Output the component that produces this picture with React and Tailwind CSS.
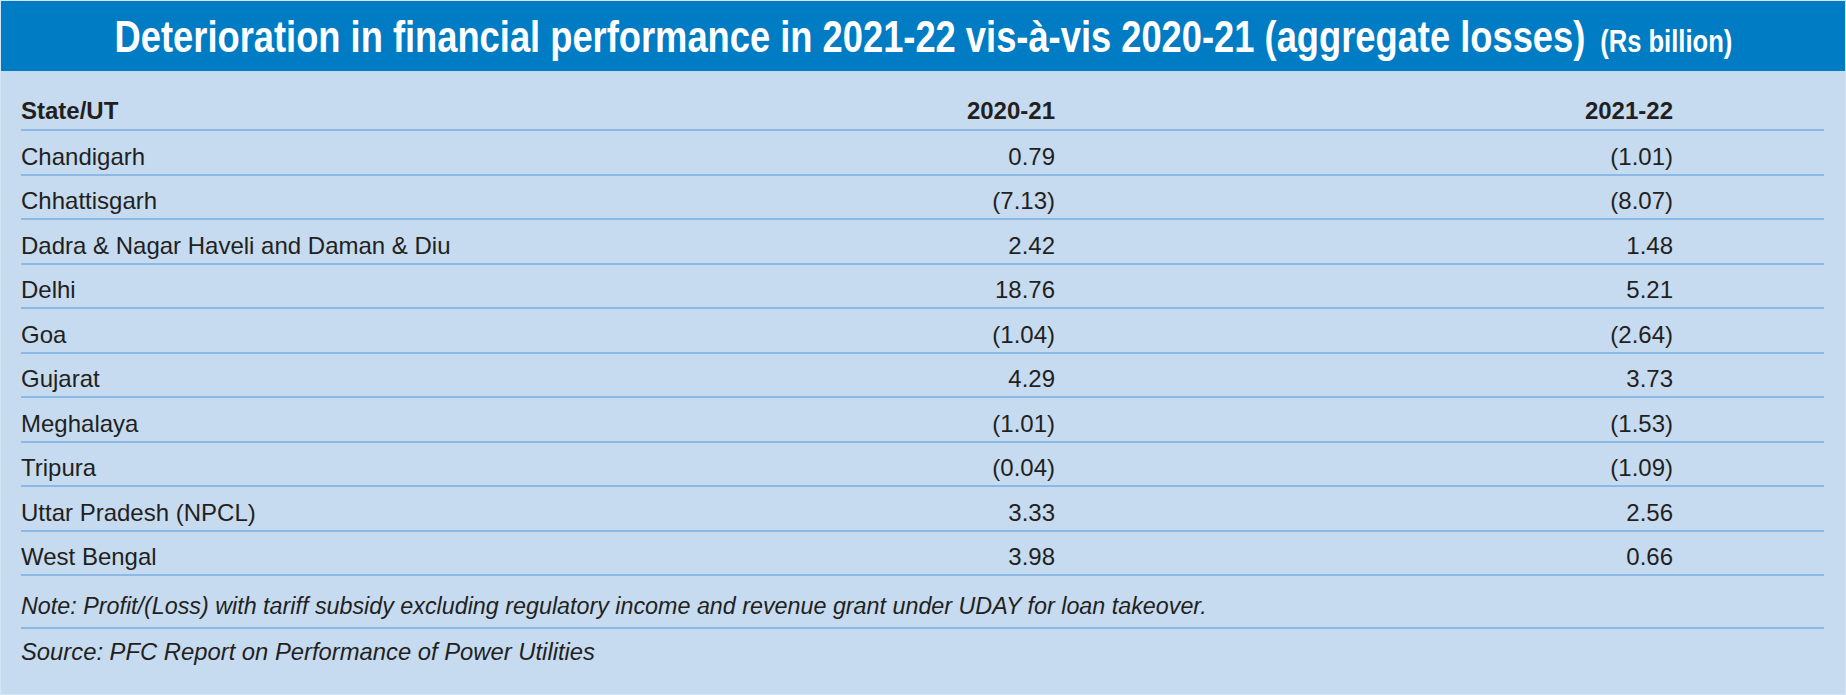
import React from 'react';

const rows = [
  ['Chandigarh', '0.79', '(1.01)'],
  ['Chhattisgarh', '(7.13)', '(8.07)'],
  ['Dadra & Nagar Haveli and Daman & Diu', '2.42', '1.48'],
  ['Delhi', '18.76', '5.21'],
  ['Goa', '(1.04)', '(2.64)'],
  ['Gujarat', '4.29', '3.73'],
  ['Meghalaya', '(1.01)', '(1.53)'],
  ['Tripura', '(0.04)', '(1.09)'],
  ['Uttar Pradesh (NPCL)', '3.33', '2.56'],
  ['West Bengal', '3.98', '0.66'],
];

function Row({ label, a, b, bold }) {
  return (
    <div className={`flex items-end border-b-2 border-[#8bb8e5] ${bold ? 'h-[60.3px] pb-[6px] font-bold' : 'h-[44.5px] pb-[5px]'}`}>
      <span className="flex-1">{label}</span>
      <span className="w-[200px] text-right">{a}</span>
      <span className="w-[618px] text-right">{b}</span>
      <span className="w-[151px]" />
    </div>
  );
}

export default function App() {
  return (
    <div className="w-[1846px] h-[695px] border border-[#d3e4f4] bg-[#c6dbf0] flex flex-col text-[#231f20] font-['Liberation_Sans',Arial,sans-serif]">
      {/* title band */}
      <div className="h-[70px] shrink-0 bg-[#007cc4] flex items-center justify-center overflow-hidden text-white font-bold">
        <div className="flex items-baseline whitespace-nowrap scale-x-[0.825] mt-[2px]">
          <span className="text-[44px] leading-none">
            Deterioration in financial performance in 2021-22 vis-à-vis 2020-21 (aggregate losses)
          </span>
          <span className="text-[31px] leading-none ml-[18px]">(Rs billion)</span>
        </div>
      </div>

      {/* table */}
      <div className="pl-[20px] pr-[21px] text-[24px] leading-[24px]">
        <Row label="State/UT" a="2020-21" b="2021-22" bold />
        {rows.map(r => (
          <Row key={r[0]} label={r[0]} a={r[1]} b={r[2]} />
        ))}
        <div className="h-[52.4px] flex items-end pb-[8px] border-b-2 border-[#8bb8e5] italic text-[23.3px] leading-[23.3px]">
          Note: Profit/(Loss) with tariff subsidy excluding regulatory income and revenue grant under UDAY for loan takeover.
        </div>
        <div className="pt-[11px] italic text-[23.8px] leading-[23.8px]">
          Source: PFC Report on Performance of Power Utilities
        </div>
      </div>
    </div>
  );
}
